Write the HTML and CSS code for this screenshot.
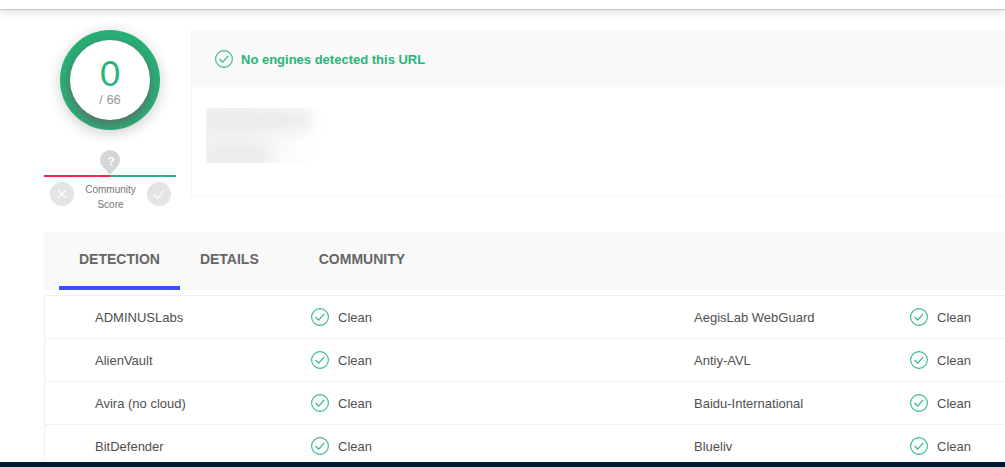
FILE: index.html
```html
<!DOCTYPE html>
<html lang="en">
<head>
<meta charset="utf-8">
<title>URL report</title>
<link rel="stylesheet" href="styles.css">
</head>
<body>
<svg class="defs" width="0" height="0" aria-hidden="true">
  <symbol id="check" viewBox="0 0 18 18">
    <circle cx="9" cy="9" r="8.4" fill="none" stroke="currentColor" stroke-width="1.1"/>
    <path d="M4.5 9l3.2 3.2 5.5-6.4" fill="none" stroke="currentColor" stroke-width="1.2"/>
  </symbol>
</svg>
<header class="topbar"></header>
<main class="report">
  <section class="summary">
    <div class="score">
      <div class="ring">
        <div class="disk">
          <span class="hits">0</span>
          <span class="total">/ 66</span>
        </div>
      </div>
      <div class="community">
        <svg class="pin" width="20" height="25" viewBox="0 0 20 25" aria-hidden="true">
          <path d="M10 24.5L2.4 16.5A10 10 0 1 1 17.6 16.5Z" fill="#d6d6d6"/>
          <path d="M8.8 9.6Q8.8 7.7 11.2 7.7Q13.5 7.7 13.5 9.5Q13.5 10.4 12.3 11.2Q11.3 11.9 11.3 13" fill="none" stroke="#fff" stroke-width="1.6"/>
          <rect x="10.5" y="14" width="1.6" height="1.6" fill="#fff"/>
        </svg>
        <div class="scale"></div>
        <div class="votes">
          <button class="vote" aria-label="Harmful"><svg width="24" height="24" viewBox="0 0 24 24"><path d="M8 8l8 8M16 8l-8 8" fill="none" stroke="#fff" stroke-width="1.2"/></svg></button>
          <span class="caption">Community<br>Score</span>
          <button class="vote" aria-label="Harmless"><svg width="24" height="24" viewBox="0 0 24 24"><path d="M7 12.3l4 4.2 6-8.5" fill="none" stroke="#fff" stroke-width="1.2"/></svg></button>
        </div>
      </div>
    </div>
    <article class="card">
      <h1 class="verdict"><svg class="check" width="18" height="18"><use href="#check"/></svg>No engines detected this URL</h1>
      <div class="card-body">
        <div class="redacted">
          <div class="smear smear-long"></div>
          <div class="smear smear-short"></div>
        </div>
      </div>
    </article>
  </section>
  <nav class="tabs">
    <a class="tab active" href="#detection">DETECTION</a>
    <a class="tab details" href="#details">DETAILS</a>
    <a class="tab" href="#community">COMMUNITY</a>
  </nav>
  <table class="engines" id="detection">
    <colgroup><col class="name-col"><col><col class="second-col"><col class="last-col"></colgroup>
    <tbody>
      <tr><td class="name">ADMINUSLabs</td><td><span class="status"><svg class="check" width="18" height="18"><use href="#check"/></svg>Clean</span></td><td>AegisLab WebGuard</td><td><span class="status"><svg class="check" width="18" height="18"><use href="#check"/></svg>Clean</span></td></tr>
      <tr><td class="name">AlienVault</td><td><span class="status"><svg class="check" width="18" height="18"><use href="#check"/></svg>Clean</span></td><td>Antiy-AVL</td><td><span class="status"><svg class="check" width="18" height="18"><use href="#check"/></svg>Clean</span></td></tr>
      <tr><td class="name">Avira (no cloud)</td><td><span class="status"><svg class="check" width="18" height="18"><use href="#check"/></svg>Clean</span></td><td>Baidu-International</td><td><span class="status"><svg class="check" width="18" height="18"><use href="#check"/></svg>Clean</span></td></tr>
      <tr><td class="name">BitDefender</td><td><span class="status"><svg class="check" width="18" height="18"><use href="#check"/></svg>Clean</span></td><td>Blueliv</td><td><span class="status"><svg class="check" width="18" height="18"><use href="#check"/></svg>Clean</span></td></tr>
    </tbody>
  </table>
</main>
<footer class="bottom"></footer>
</body>
</html>
```

FILE: styles.css
```css
* { box-sizing: border-box; }

body {
  margin: 0;
  height: 100vh;
  display: flex;
  flex-direction: column;
  background: #fff;
  color: #505050;
  font: 13px/18px "Liberation Sans", Arial, sans-serif;
}

.defs { display: none; }

.topbar {
  flex: none;
  height: 10px;
  z-index: 1;
  border-bottom: 1px solid #c8c8c8;
  box-shadow: 0 2px 8px rgba(0, 0, 0, 0.14);
}

.report {
  flex: 1;
  min-height: 0;
  overflow: hidden;
  padding: 20px 0 0 44px;
}

.summary {
  display: flex;
  gap: 15px;
  margin-bottom: 20px;
}

.score {
  width: 132px;
  display: flex;
  flex-direction: column;
  align-items: center;
  gap: 20px;
}

.ring {
  width: 100px;
  height: 100px;
  padding: 10px;
  overflow: hidden;
  border-radius: 50%;
  background: #27b176;
  box-shadow: 0 3px 14px rgba(0, 0, 0, 0.2);
}

.disk {
  height: 80px;
  padding-top: 13px;
  border-radius: 50%;
  background: #fff;
  box-shadow: 0 4px 12px rgba(130, 60, 90, 0.65);
  display: flex;
  flex-direction: column;
  align-items: center;
}

.hits {
  color: #27b57a;
  font-family: Lato, sans-serif;
  font-size: 34px;
  line-height: 40px;
}

.total {
  color: #999;
  line-height: 14px;
}

.community {
  width: 100%;
  display: flex;
  flex-direction: column;
  align-items: center;
}

.pin { display: block; }

.scale {
  width: 100%;
  height: 2px;
  background: linear-gradient(90deg, #f91f52 50%, #27b176 50%);
}

.votes {
  width: 100%;
  display: flex;
  justify-content: space-between;
  align-items: flex-start;
  padding: 5px 5px 0 6px;
}

.vote {
  width: 24px;
  height: 24px;
  padding: 0;
  border: 0;
  border-radius: 50%;
  background: #e4e4e4;
}

.vote svg { display: block; }

.caption {
  color: #777;
  font-size: 10px;
  line-height: 15px;
  text-align: center;
}

.card {
  flex: 1;
  align-self: flex-start;
  border-left: 1px solid #f5f5f5;
  border-bottom: 1px solid #f5f5f5;
}

.verdict {
  display: flex;
  align-items: center;
  gap: 8px;
  height: 57px;
  margin: 0;
  padding: 3px 23px 0;
  background: #f9f9f9;
  color: #27b57a;
  font-size: 13px;
  font-weight: bold;
}

.check {
  flex: none;
  margin-bottom: 2px;
  color: #31b981;
}

.card-body { padding: 21px 14px 33px; }

.redacted {
  width: 118px;
  height: 55px;
  overflow: hidden;
  background: linear-gradient(90deg, #f5f5f5 30%, #fff 95%);
}

.smear {
  height: 18px;
  background: #e8e8e8;
  filter: blur(8px);
}

.smear-long {
  width: 104px;
  margin: 3px 0 16px;
}

.smear-short { width: 62px; }

.tabs {
  display: flex;
  height: 58px;
  margin-bottom: 5px;
  padding-left: 15px;
  background: #f9f9f9;
}

.tab {
  padding: 0 20px;
  border-bottom: 4px solid transparent;
  color: #666;
  font-size: 14px;
  font-weight: bold;
  line-height: 54px;
  text-decoration: none;
}

.details { margin-right: 20px; }

.active { border-color: #3b4dff; }

.engines {
  width: 100%;
  table-layout: fixed;
  border-spacing: 0;
  border-left: 1px solid #f0f0f0;
}

.name-col { width: 266px; }
.second-col { width: 216px; }
.last-col { width: 95px; }

.engines td {
  height: 43px;
  padding: 1px 0 0;
  border-top: 1px solid #f0f0f0;
}

.engines .name { padding-left: 50px; }

.status {
  display: flex;
  align-items: center;
  gap: 9px;
}

.bottom {
  flex: none;
  height: 5px;
  background: #00162f;
}
```
